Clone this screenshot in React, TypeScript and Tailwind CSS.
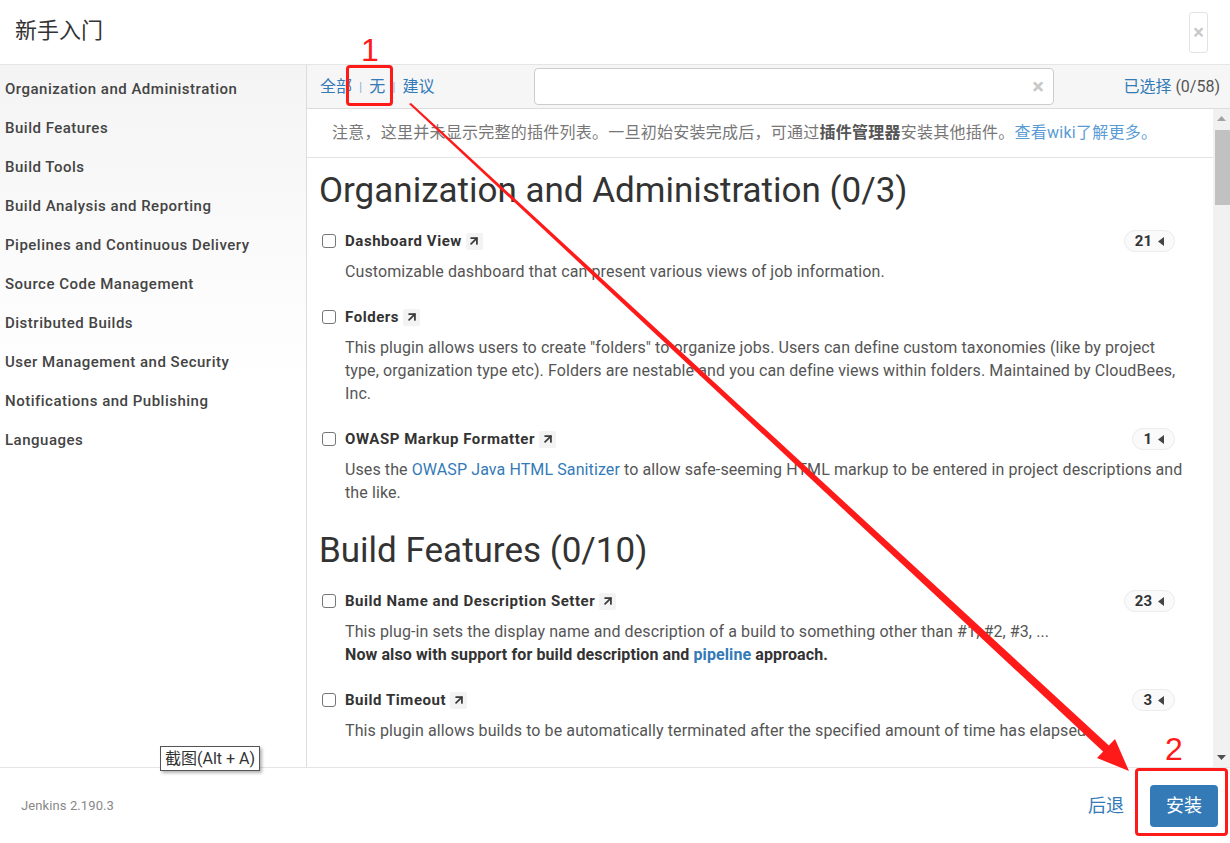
import { ArrowUpRight } from 'lucide-react';

const categories = [
    'Organization and Administration',
    'Build Features',
    'Build Tools',
    'Build Analysis and Reporting',
    'Pipelines and Continuous Delivery',
    'Source Code Management',
    'Distributed Builds',
    'User Management and Security',
    'Notifications and Publishing',
    'Languages',
];

const cjk = "font-['Roboto','Noto_Sans_CJK_SC',sans-serif]";

function Checkbox() {
    return <span className="w-[14px] h-[14px] border border-[#767676] rounded-[3px] bg-white shrink-0" />;
}

function Caret() {
    return (
        <svg width="6" height="9" viewBox="0 0 6 9" className="ml-[6px]">
            <path d="M6 0 L0 4.5 L6 9 Z" fill="#444" />
        </svg>
    );
}

function Plugin({ name, count, children }: { name: string; count?: number; children: React.ReactNode }) {
    return (
        <div className="mb-[23px]">
            {/* Title row */}
            <div className="h-[22px] flex items-center pl-[15px] pr-[38px]">
                <Checkbox />
                <span className="ml-[9px] text-[15px] tracking-[0.55px] font-bold text-[#333]">{name}</span>
                <span className="ml-[4px] w-[17px] h-[17px] bg-[#f3f3f3] rounded-[2px] flex items-center justify-center">
                    <ArrowUpRight className="w-[14px] h-[14px] text-[#3a3a3a]" strokeWidth={3} />
                </span>
                {count !== undefined && (
                    <span className="ml-auto h-[22px] px-[10px] rounded-full border border-[#ececec] bg-[#fafafa] flex items-center text-[15px] font-bold text-[#333]">
                        {count}
                        <Caret />
                    </span>
                )}
            </div>
            {/* Description */}
            <p className="mt-[8px] pl-[38px] pr-[23px] text-[16px] tracking-[0.1px] leading-[23px] text-[#555]">{children}</p>
        </div>
    );
}

export default function App() {
    return (
        <div className={`w-[1230px] h-[843px] relative flex flex-col bg-white overflow-hidden ${cjk}`}>
            {/* Header */}
            <div className="h-[65px] shrink-0 border-b border-[#e5e5e5] flex items-center justify-between pl-[15px] pr-[22px] pb-[3px]">
                <h2 className="text-[22px] text-[#333]">新手入门</h2>
                <button className="w-[19px] h-[41px] mt-[3px] border border-[#e3e3e3] rounded-[3px] flex items-center justify-center text-[#c8c8c8] text-[20px] font-bold leading-none">
                    ×
                </button>
            </div>

            {/* Body */}
            <div className="flex flex-1 min-h-0">
                {/* Sidebar */}
                <div className="w-[307px] shrink-0 border-r border-[#ddd] pt-[5px] bg-[linear-gradient(to_bottom,#f4f4f4,#ffffff_320px)]">
                    {categories.map((c) => (
                        <div key={c} className="h-[39px] flex items-center pl-[5px] text-[15px] tracking-[0.5px] font-medium text-[#444]">
                            {c}
                        </div>
                    ))}
                </div>

                {/* Main */}
                <div className="flex-1 flex flex-col min-w-0">
                    {/* Toolbar */}
                    <div className="h-[44px] shrink-0 bg-[#f6f6f6] border-b border-[#ddd] flex items-center pl-[13px] pr-[10px]">
                        <div className="w-[214px] flex items-center text-[16px] text-[#337ab7]">
                            <span>全部</span>
                            <span className="mx-[7px] text-[#8fb3d6] text-[13px]">|</span>
                            <span>无</span>
                            <span className="mx-[7px] text-[#8fb3d6] text-[13px]">|</span>
                            <span>建议</span>
                        </div>
                        <div className="w-[520px] h-[37px] bg-white border border-[#ccc] rounded-[4px] flex items-center justify-end pr-[9px]">
                            <span className="text-[#c8c8c8] text-[22px] font-bold leading-none">×</span>
                        </div>
                        <div className="ml-auto text-[16px]">
                            <span className="text-[#337ab7]">已选择</span>
                            <span className="text-[#555]"> (0/58)</span>
                        </div>
                    </div>

                    <div className="flex-1 flex min-h-0">
                        {/* Plugin list */}
                        <div className="flex-1 min-w-0 overflow-hidden">
                            <div className="h-[49px] border-b border-[#e3e3e3] flex items-center pl-[25px] text-[16px] tracking-[0.25px] text-[#777]">
                                注意，这里并未显示完整的插件列表。一旦初始安装完成后，可通过
                                <b className="text-[#555]">插件管理器</b>
                                安装其他插件。
                                <span className="text-[#5a9bd5]">查看wiki了解更多。</span>
                            </div>

                            <div className="pt-[9px]">
                                <section className="pt-[4px]">
                                    <h1 className="h-[40px] leading-[40px] pl-[12px] text-[35px] text-[#333] mb-[19px]">
                                        Organization and Administration (0/3)
                                    </h1>
                                    <Plugin name="Dashboard View" count={21}>
                                        Customizable dashboard that can present various views of job information.
                                    </Plugin>
                                    <Plugin name="Folders">
                                        This plugin allows users to create "folders" to organize jobs. Users can define custom taxonomies (like by project type, organization type etc). Folders are nestable and you can define views within folders. Maintained by CloudBees, Inc.
                                    </Plugin>
                                    <Plugin name="OWASP Markup Formatter" count={1}>
                                        Uses the <a className="text-[#337ab7]">OWASP Java HTML Sanitizer</a> to allow safe-seeming HTML markup to be entered in project descriptions and the like.
                                    </Plugin>
                                </section>
                                <section className="pt-[4px]">
                                    <h1 className="h-[40px] leading-[40px] pl-[12px] text-[35px] text-[#333] mb-[19px]">
                                        Build Features (0/10)
                                    </h1>
                                    <Plugin name="Build Name and Description Setter" count={23}>
                                        This plug-in sets the display name and description of a build to something other than #1, #2, #3, ...
                                        <br />
                                        <b className="text-[#333]">
                                            Now also with support for build description and <a className="text-[#337ab7]">pipeline</a> approach.
                                        </b>
                                    </Plugin>
                                    <Plugin name="Build Timeout" count={3}>
                                        This plugin allows builds to be automatically terminated after the specified amount of time has elapsed.
                                    </Plugin>
                                </section>
                            </div>
                        </div>

                        {/* Scrollbar */}
                        <div className="w-[17px] shrink-0 bg-[#f1f1f1] flex flex-col items-center">
                            <svg width="9" height="5" viewBox="0 0 9 5" className="mt-[7px]">
                                <path d="M0 5 L4.5 0 L9 5 Z" fill="#a3a3a3" />
                            </svg>
                            <div className="mt-[9px] w-[15px] h-[75px] bg-[#c1c1c1] self-end" />
                            <svg width="9" height="5" viewBox="0 0 9 5" className="mt-auto mb-[7px]">
                                <path d="M0 0 L4.5 5 L9 0 Z" fill="#505050" />
                            </svg>
                        </div>
                    </div>
                </div>
            </div>

            {/* Footer */}
            <div className="h-[76px] shrink-0 border-t border-[#e5e5e5] flex items-center pl-[21px] pr-[12px]">
                <span className="text-[13px] tracking-[0.1px] text-[#888]">Jenkins 2.190.3</span>
                <span className="ml-auto text-[18px] text-[#337ab7]">后退</span>
                <button className="ml-[26px] w-[68px] h-[42px] rounded-[4px] bg-[#337ab7] text-white text-[18px]">安装</button>
            </div>

            {/* Screenshot annotations */}
            <div className="absolute left-[346px] top-[65px] w-[47px] h-[41px] border-[3px] border-[#ff1a1a] rounded-[4px]" />
            <div className="absolute left-[361px] top-[34px] text-[32px] leading-none text-[#ff1a1a] font-['Liberation_Sans',sans-serif]">1</div>
            <div className="absolute left-[1135px] top-[768px] w-[93px] h-[68px] border-[3px] border-[#ff1a1a] rounded-[4px]" />
            <div className="absolute left-[1165px] top-[733px] text-[32px] leading-none text-[#ff1a1a] font-['Liberation_Sans',sans-serif]">2</div>
            <svg className="absolute left-0 top-0 pointer-events-none" width="1230" height="843">
                <polygon points="409,104 411,103 1116,752 1110,758" fill="#ff1a1a" />
                <polygon points="1129,771 1097,758 1115,739" fill="#ff1a1a" />
            </svg>
            <div className="absolute left-[160px] top-[746px] h-[25px] px-[4px] flex items-center bg-white border border-[#555] shadow-[2px_2px_3px_rgba(0,0,0,0.3)] text-[16px] text-[#333]">
                截图(Alt + A)
            </div>
        </div>
    );
}
